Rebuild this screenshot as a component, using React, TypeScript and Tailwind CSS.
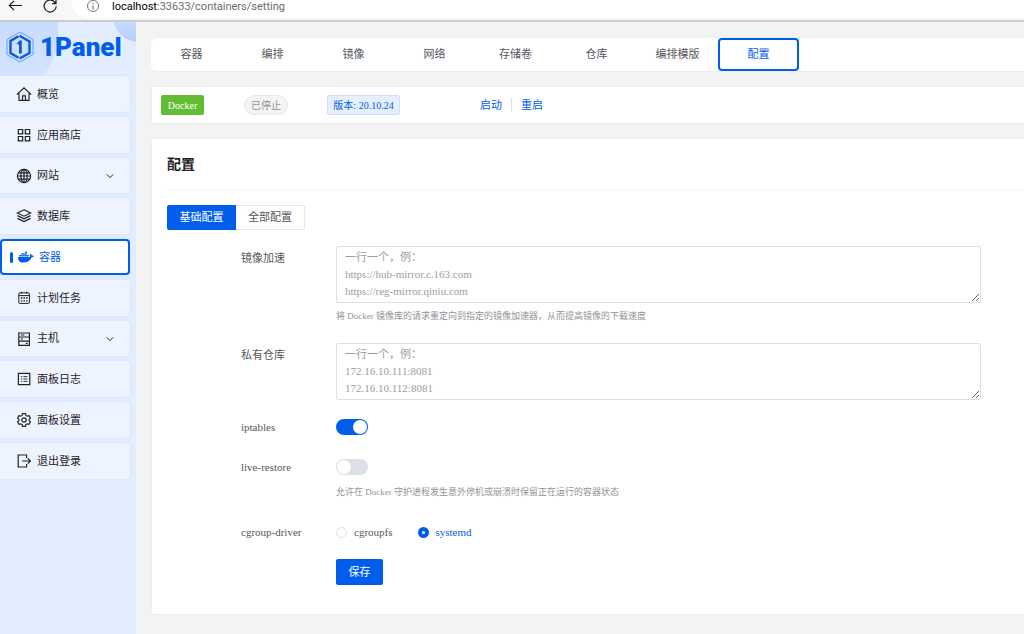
import { useState, type ReactNode } from 'react';
import clsx from 'clsx';
import { FaDocker } from 'react-icons/fa';

function LineIcon({ children }: { children: ReactNode }) {
  return (
    <svg viewBox="0 0 16 16" className="size-4 shrink-0" fill="none" stroke="currentColor" strokeWidth="1.2" aria-hidden="true">
      {children}
    </svg>
  );
}

const icons = {
  home: (
    <LineIcon>
      <path d="M.8 8.6 8 1.8l7.2 6.8M3 7v7.4h10V7M6.5 14.2V9.8h3v4.4" />
    </LineIcon>
  ),
  apps: (
    <LineIcon>
      <path d="M2.3 2.5h4.4v4.4H2.3zM9.3 2.5h4.4v4.4H9.3zM2.3 9.5h4.4v4.4H2.3zM9.3 9.5h4.4v4.4H9.3z" />
    </LineIcon>
  ),
  globe: (
    <LineIcon>
      <circle cx="8" cy="8" r="6.6" />
      <ellipse cx="8" cy="8" rx="3.2" ry="6.6" />
      <path d="M8 1.4v13.2M1.4 8h13.2M2.4 4.8h11.2M2.4 11.2h11.2" />
    </LineIcon>
  ),
  layers: (
    <LineIcon>
      <path d="M8 1.8 14.6 5 8 8.2 1.4 5zM1.4 7.6 8 10.8l6.6-3.2M1.4 10.4 8 13.6l6.6-3.2" />
    </LineIcon>
  ),
  cron: (
    <LineIcon>
      <rect x="2.8" y="2.8" width="10.6" height="10.6" rx="1" strokeWidth="1" />
      <path d="M2.8 5.6h10.6M5.4 1.8v2M10.8 1.8v2" strokeWidth="1" />
      <path d="M4.8 8h6.8M4.8 10.8h6.8" strokeWidth="1.3" strokeDasharray="1.6 1" />
    </LineIcon>
  ),
  host: (
    <LineIcon>
      <path d="M2.8 2h10.6v12.400H2.8zM2.8 6h10.6M2.8 10.200h10.6M4.8 4h3.6M4.8 8h2.2M9.800 12.300h1.800" />
    </LineIcon>
  ),
  logs: (
    <LineIcon>
      <path d="M2.4 2.4h11.4v11.2H2.4z" />
      <path d="M7.4 5.6h4M7.4 8h4M7.4 10.4h4M4.800 5.6h1.400M4.800 8h1.400M4.800 10.4h1.400" strokeWidth=".9" />
    </LineIcon>
  ),
  settings: (
    <LineIcon>
      <path d="M6.6 1.6h2.8l.5 1.8 1.3.8 1.8-.5 1.4 2.4L13.1 7.4v1.2l1.3 1.3-1.4 2.4-1.8-.5-1.3.8-.5 1.8H6.6l-.5-1.8-1.3-.8-1.8.5-1.4-2.4 1.3-1.3V7.4L1.6 6.1 3 3.7l1.8.5 1.3-.8z" />
      <circle cx="8" cy="8" r="2.2" />
    </LineIcon>
  ),
  logout: (
    <LineIcon>
      <path d="M10.6 5V2H2.2v12h8.4v-3M6 8h8.4M11.8 5.4 14.4 8l-2.6 2.6" />
    </LineIcon>
  ),
};

const menu = [
  { label: '概览', icon: icons.home },
  { label: '应用商店', icon: icons.apps },
  { label: '网站', icon: icons.globe, children: true },
  { label: '数据库', icon: icons.layers },
  { label: '容器', icon: <FaDocker className="size-4 shrink-0" />, active: true },
  { label: '计划任务', icon: icons.cron },
  { label: '主机', icon: icons.host, children: true },
  { label: '面板日志', icon: icons.logs },
  { label: '面板设置', icon: icons.settings },
  { label: '退出登录', icon: icons.logout },
];

const tabs = ['容器', '编排', '镜像', '网络', '存储卷', '仓库', '编排模版', '配置'];

function BrowserBar() {
  return (
    <header className="flex h-[22px] border-b-2 border-[#c9cccc] bg-[#f7f7f7] text-[#1b1b1b]">
      <button aria-label="Back" className="ml-2 h-3 w-4">
        <svg viewBox="0 0 16 12" className="h-3 w-4" fill="none" stroke="currentColor" strokeWidth="1.2">
          <path d="M14 5.5H1.5M6 .8 1.3 5.5 6 10.2" />
        </svg>
      </button>
      <button aria-label="Reload" className="ml-[18px] h-3.5 w-4">
        <svg viewBox="0 0 16 14" className="h-3.5 w-4" fill="none" stroke="currentColor" strokeWidth="1.2">
          <path d="M13.600 3.400A6 6 0 1 0 14.200 6.200M14 0v3.600h-3.800" />
        </svg>
      </button>
      <div className="ml-3.5 flex h-[18px] flex-1 items-start gap-3 rounded-bl-2xl bg-white pl-3.5">
        <svg viewBox="0 0 14 14" className="size-3.5" fill="none" stroke="#777" aria-hidden="true">
          <circle cx="7" cy="6" r="5.500" />
          <path d="M7 5.400v4M7 2.800v1.300" strokeWidth="1.2" />
        </svg>
        <span className="font-['Roboto',sans-serif] text-[11px] leading-[13px] text-[#6b6b6b]">
          <span className="text-black">localhost</span>:33633/containers/setting
        </span>
      </div>
    </header>
  );
}

function Logo() {
  return (
    <a href="#home" aria-label="1Panel" className="flex h-[54px] items-center gap-1.5 pb-1 pl-1.5 text-[#005eeb]">
      <svg viewBox="0 0 28 32" className="h-8 w-7" fill="none" aria-hidden="true">
        <path d="M14 1 27 8.5v15L14 31 1 23.500v-15z" stroke="#4a8cf5" strokeWidth=".8" />
        <path d="M12.500 5.300 4.500 10v12l8 4.700" stroke="#1556c8" strokeWidth="2.400" />
        <path d="M13.500 4.700 23.500 10.500V22l-10 5.500" stroke="#005eeb" strokeWidth="2.400" />
        <path d="m10.500 13 3-3.500h2.300v13H13V13.500z" fill="#1556c8" />
      </svg>
      <span className="font-['Roboto',sans-serif] text-[26px] leading-8 font-black">1Panel</span>
    </a>
  );
}

function Sidebar() {
  return (
    <aside className="relative w-[136px] shrink-0 overflow-hidden bg-[#e2edff]">
      <div className="absolute -top-16 -left-[90px] size-[148px] rounded-full bg-linear-to-b from-[#b5d0fc] to-[#dce9ff]" />
      <div className="absolute -top-8 left-[113px] size-[52px] rounded-full bg-linear-to-b from-[#e0ecff] to-[#b5d0fc]" />
      <div className="relative">
        <Logo />
        <nav className="flex flex-col gap-[5px] pr-1.5">
          {menu.map((item) => (
            <a
              key={item.label}
              href="#menu"
              className={clsx(
                'flex items-center gap-[5px] rounded-r-sm text-[11px] shadow-[0_0_2px_#c8dbfb]',
                item.children ? 'h-[35px]' : 'h-9',
                item.active
                  ? 'rounded-sm border-2 border-[#005eeb] bg-white pl-2 text-[#005eeb]'
                  : 'bg-[#eef4ff] pl-4 text-[#1f2329]',
              )}
            >
              {item.active && <span className="h-[11px] w-[3px] rounded-sm bg-[#005eeb]" />}
              {item.icon}
              <span>{item.label}</span>
              {item.children && (
                <svg viewBox="0 0 8 8" className="mr-4 ml-auto size-2" fill="none" stroke="currentColor" aria-hidden="true">
                  <path d="m.8 2.400 3.200 3.200 3.200-3.200" />
                </svg>
              )}
            </a>
          ))}
        </nav>
      </div>
    </aside>
  );
}

function Field({ label, htmlFor, className, children }: { label: string; htmlFor: string; className: string; children: ReactNode }) {
  return (
    <div className={clsx('flex', className)}>
      <label htmlFor={htmlFor} className="w-[95px] shrink-0 leading-6">
        {label}
      </label>
      <div className="min-w-0 flex-1">{children}</div>
    </div>
  );
}

const textareaClass =
  'block w-full resize-y rounded-xs border border-[#dcdfe6] bg-white px-2 py-[2px] leading-[17px] placeholder:text-[#9a9da3] outline-none';
const switchClass =
  "block h-4 w-8 appearance-none rounded-full bg-[#dcdfe6] p-px before:block before:size-3.5 before:rounded-full before:bg-white before:content-[''] checked:bg-[#005eeb] checked:before:ml-4";
const radioClass = 'size-[11px] appearance-none rounded-full border border-[#dcdfe6] bg-white checked:border-4 checked:border-[#005eeb]';
const helpClass = 'text-[9px] leading-3 text-[#8f9399]';

function SettingForm() {
  const [iptables, setIptables] = useState(true);
  const [liveRestore, setLiveRestore] = useState(false);
  const [driver, setDriver] = useState('systemd');

  return (
    <form className="mt-4 pr-[43px] pl-[74px]" onSubmit={(e) => e.preventDefault()}>
      <Field label="镜像加速" htmlFor="mirrors" className="h-[97px]">
        <textarea
          id="mirrors"
          rows={3}
          className={textareaClass}
          placeholder={'一行一个，例：\nhttps://hub-mirror.c.163.com\nhttps://reg-mirror.qiniu.com'}
        />
        <p className={clsx(helpClass, 'mt-[7px]')}>将 Docker 镜像库的请求重定向到指定的镜像加速器，从而提高镜像的下载速度</p>
      </Field>
      <Field label="私有仓库" htmlFor="registries" className="h-[72px]">
        <textarea
          id="registries"
          rows={3}
          className={textareaClass}
          placeholder={'一行一个，例：\n172.16.10.111:8081\n172.16.10.112:8081'}
        />
      </Field>
      <Field label="iptables" htmlFor="iptables" className="h-10">
        <div className="flex h-6 items-center">
          <input
            id="iptables"
            type="checkbox"
            role="switch"
            className={switchClass}
            checked={iptables}
            onChange={(e) => setIptables(e.target.checked)}
          />
        </div>
      </Field>
      <Field label="live-restore" htmlFor="live-restore" className="h-[65px]">
        <div className="flex h-6 items-center">
          <input
            id="live-restore"
            type="checkbox"
            role="switch"
            className={switchClass}
            checked={liveRestore}
            onChange={(e) => setLiveRestore(e.target.checked)}
          />
        </div>
        <p className={clsx(helpClass, 'mt-[7px]')}>允许在 Docker 守护进程发生意外停机或崩溃时保留正在运行的容器状态</p>
      </Field>
      <Field label="cgroup-driver" htmlFor={driver} className="h-[39px]">
        <div className="flex h-6 items-center gap-[25px]">
          {['cgroupfs', 'systemd'].map((name) => (
            <label key={name} htmlFor={name} className={clsx('flex items-center gap-[7px]', driver === name && 'text-[#005eeb]')}>
              <input
                id={name}
                type="radio"
                name="driver"
                className={radioClass}
                checked={driver === name}
                onChange={() => setDriver(name)}
              />
              {name}
            </label>
          ))}
        </div>
      </Field>
      <button type="submit" className="ml-[95px] block h-[26px] w-[47px] rounded-xs bg-[#005eeb] text-white">
        保存
      </button>
    </form>
  );
}

const cardClass = 'border-y border-[#e9edf4] bg-white';

export default function App() {
  return (
    <div className="flex min-h-screen flex-col bg-[#f3f3f3] font-['Liberation_Serif','Noto_Sans_CJK_SC',serif] text-[11px] text-[#54575d]">
      <BrowserBar />
      <div className="flex flex-1">
        <Sidebar />
        <main className="min-w-0 flex-1 pt-[15px] pb-5 pl-[15px]">
          <div className={clsx(cardClass, 'flex rounded-l-md')}>
            {tabs.map((tab) => (
              <button
                key={tab}
                className={clsx(
                  'h-[33px] w-[81px] shrink-0',
                  tab === '配置' && 'rounded-sm border-2 border-[#005eeb] text-[#005eeb]',
                )}
              >
                {tab}
              </button>
            ))}
          </div>

          <div className={clsx(cardClass, 'mt-3.5 flex h-[38px] items-center rounded-l-sm border-l pl-[9px]')}>
            <span className="flex h-5 w-[43px] items-center justify-center rounded-xs bg-[#62bd35] text-[10px] text-white">Docker</span>
            <span className="ml-10 flex h-5 w-11 items-center justify-center rounded-full border border-[#e9e9eb] bg-[#f4f4f5] text-[10px] text-[#909399]">
              已停止
            </span>
            <span className="ml-[39px] flex h-5 w-[73px] items-center justify-center rounded-xs border border-[#ccdffb] bg-[#e6effd] text-[10px] text-[#005eeb]">
              版本: 20.10.24
            </span>
            <button className="ml-20 text-[#005eeb]">启动</button>
            <span className="mx-[9px] h-3.5 w-px bg-[#dcdfe6]" />
            <button className="text-[#005eeb]">重启</button>
          </div>

          <section className={clsx(cardClass, 'mt-3.5 rounded-l-sm border-l pb-[29px] pl-[15px]')}>
            <h1 className="border-b border-dotted border-[#e8eaee] pt-4 pb-3.5 text-sm leading-5 font-bold text-[#1f2329]">配置</h1>
            <div className="mt-[15px] flex">
              <button className="h-[25px] w-[69px] rounded-l-xs bg-[#005eeb] text-white">基础配置</button>
              <button className="h-[25px] w-[69px] rounded-r-xs border border-l-0 border-[#e4e6eb]">全部配置</button>
            </div>
            <SettingForm />
          </section>
        </main>
      </div>
    </div>
  );
}
